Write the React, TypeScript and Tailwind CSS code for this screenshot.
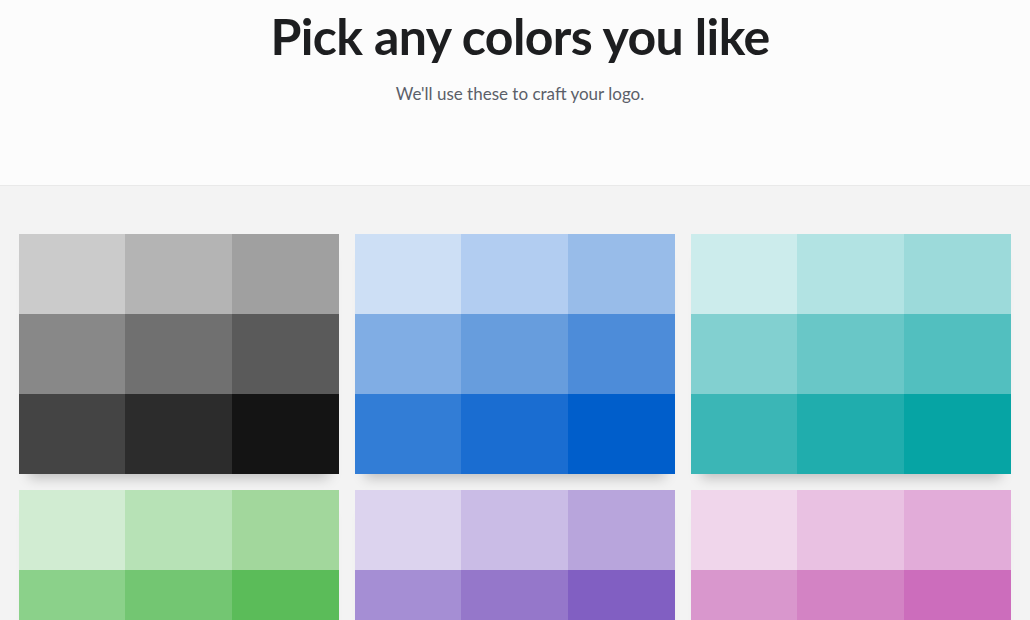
import React from "react";

const palettes: string[][] = [
  ["#cbcbcb", "#b4b4b4", "#a0a0a0", "#888888", "#707070", "#5a5a5a", "#444444", "#2c2c2c", "#141414"],
  ["#cddff5", "#b2cdf1", "#98bce9", "#80ade4", "#679ddd", "#4d8cd9", "#327dd6", "#1a6dd1", "#005ecb"],
  ["#ccecec", "#b2e3e3", "#9cdada", "#82d0d0", "#69c7c7", "#52bfbf", "#3bb6b6", "#20adad", "#06a4a4"],
  ["#d1ecd2", "#b7e2b6", "#a2d79c", "#8bd18a", "#73c672", "#5bbc59", "#45b142", "#2ea62c", "#179b16"],
  ["#dcd3ee", "#cabce6", "#b8a5dc", "#a58ed4", "#9577ca", "#815fc2", "#7049b9", "#5e33b0", "#4c1ea7"],
  ["#f0d6eb", "#e9c1e2", "#e2acd9", "#d997cd", "#d383c4", "#cc6dbc", "#c458b3", "#bd43aa", "#b52ea1"],
];

function Card({ colors }: { colors: string[] }) {
  return (
    <div className="grid grid-cols-[106px_107px_107px] grid-rows-[80px_80px_80px] w-[320px] shadow-[0_14px_12px_-10px_rgba(0,0,0,0.22)] cursor-pointer">
      {colors.map((c, i) => (
        <div key={i} style={{ backgroundColor: c }} />
      ))}
    </div>
  );
}

export default function App() {
  return (
    <div className="min-h-[620px] w-full bg-[#f3f3f3] font-['Lato',sans-serif]">
      <header className="h-[186px] bg-[#fcfcfc] border-b border-[#e9e9e9] flex flex-col items-center pl-[10px]">
        <h1 className="mt-[6px] text-[50px] leading-[60px] font-bold text-[#1d1e20] tracking-[-0.6px]">
          Pick any colors you like
        </h1>
        <p className="mt-[17px] text-[17px] leading-[22px] text-[#5b5f69]">
          We'll use these to craft your logo.
        </p>
      </header>
      <main className="pt-[48px] px-[19px] grid grid-cols-[320px_320px_320px] gap-[16px]">
        {palettes.map((p, i) => (
          <Card key={i} colors={p} />
        ))}
      </main>
    </div>
  );
}
